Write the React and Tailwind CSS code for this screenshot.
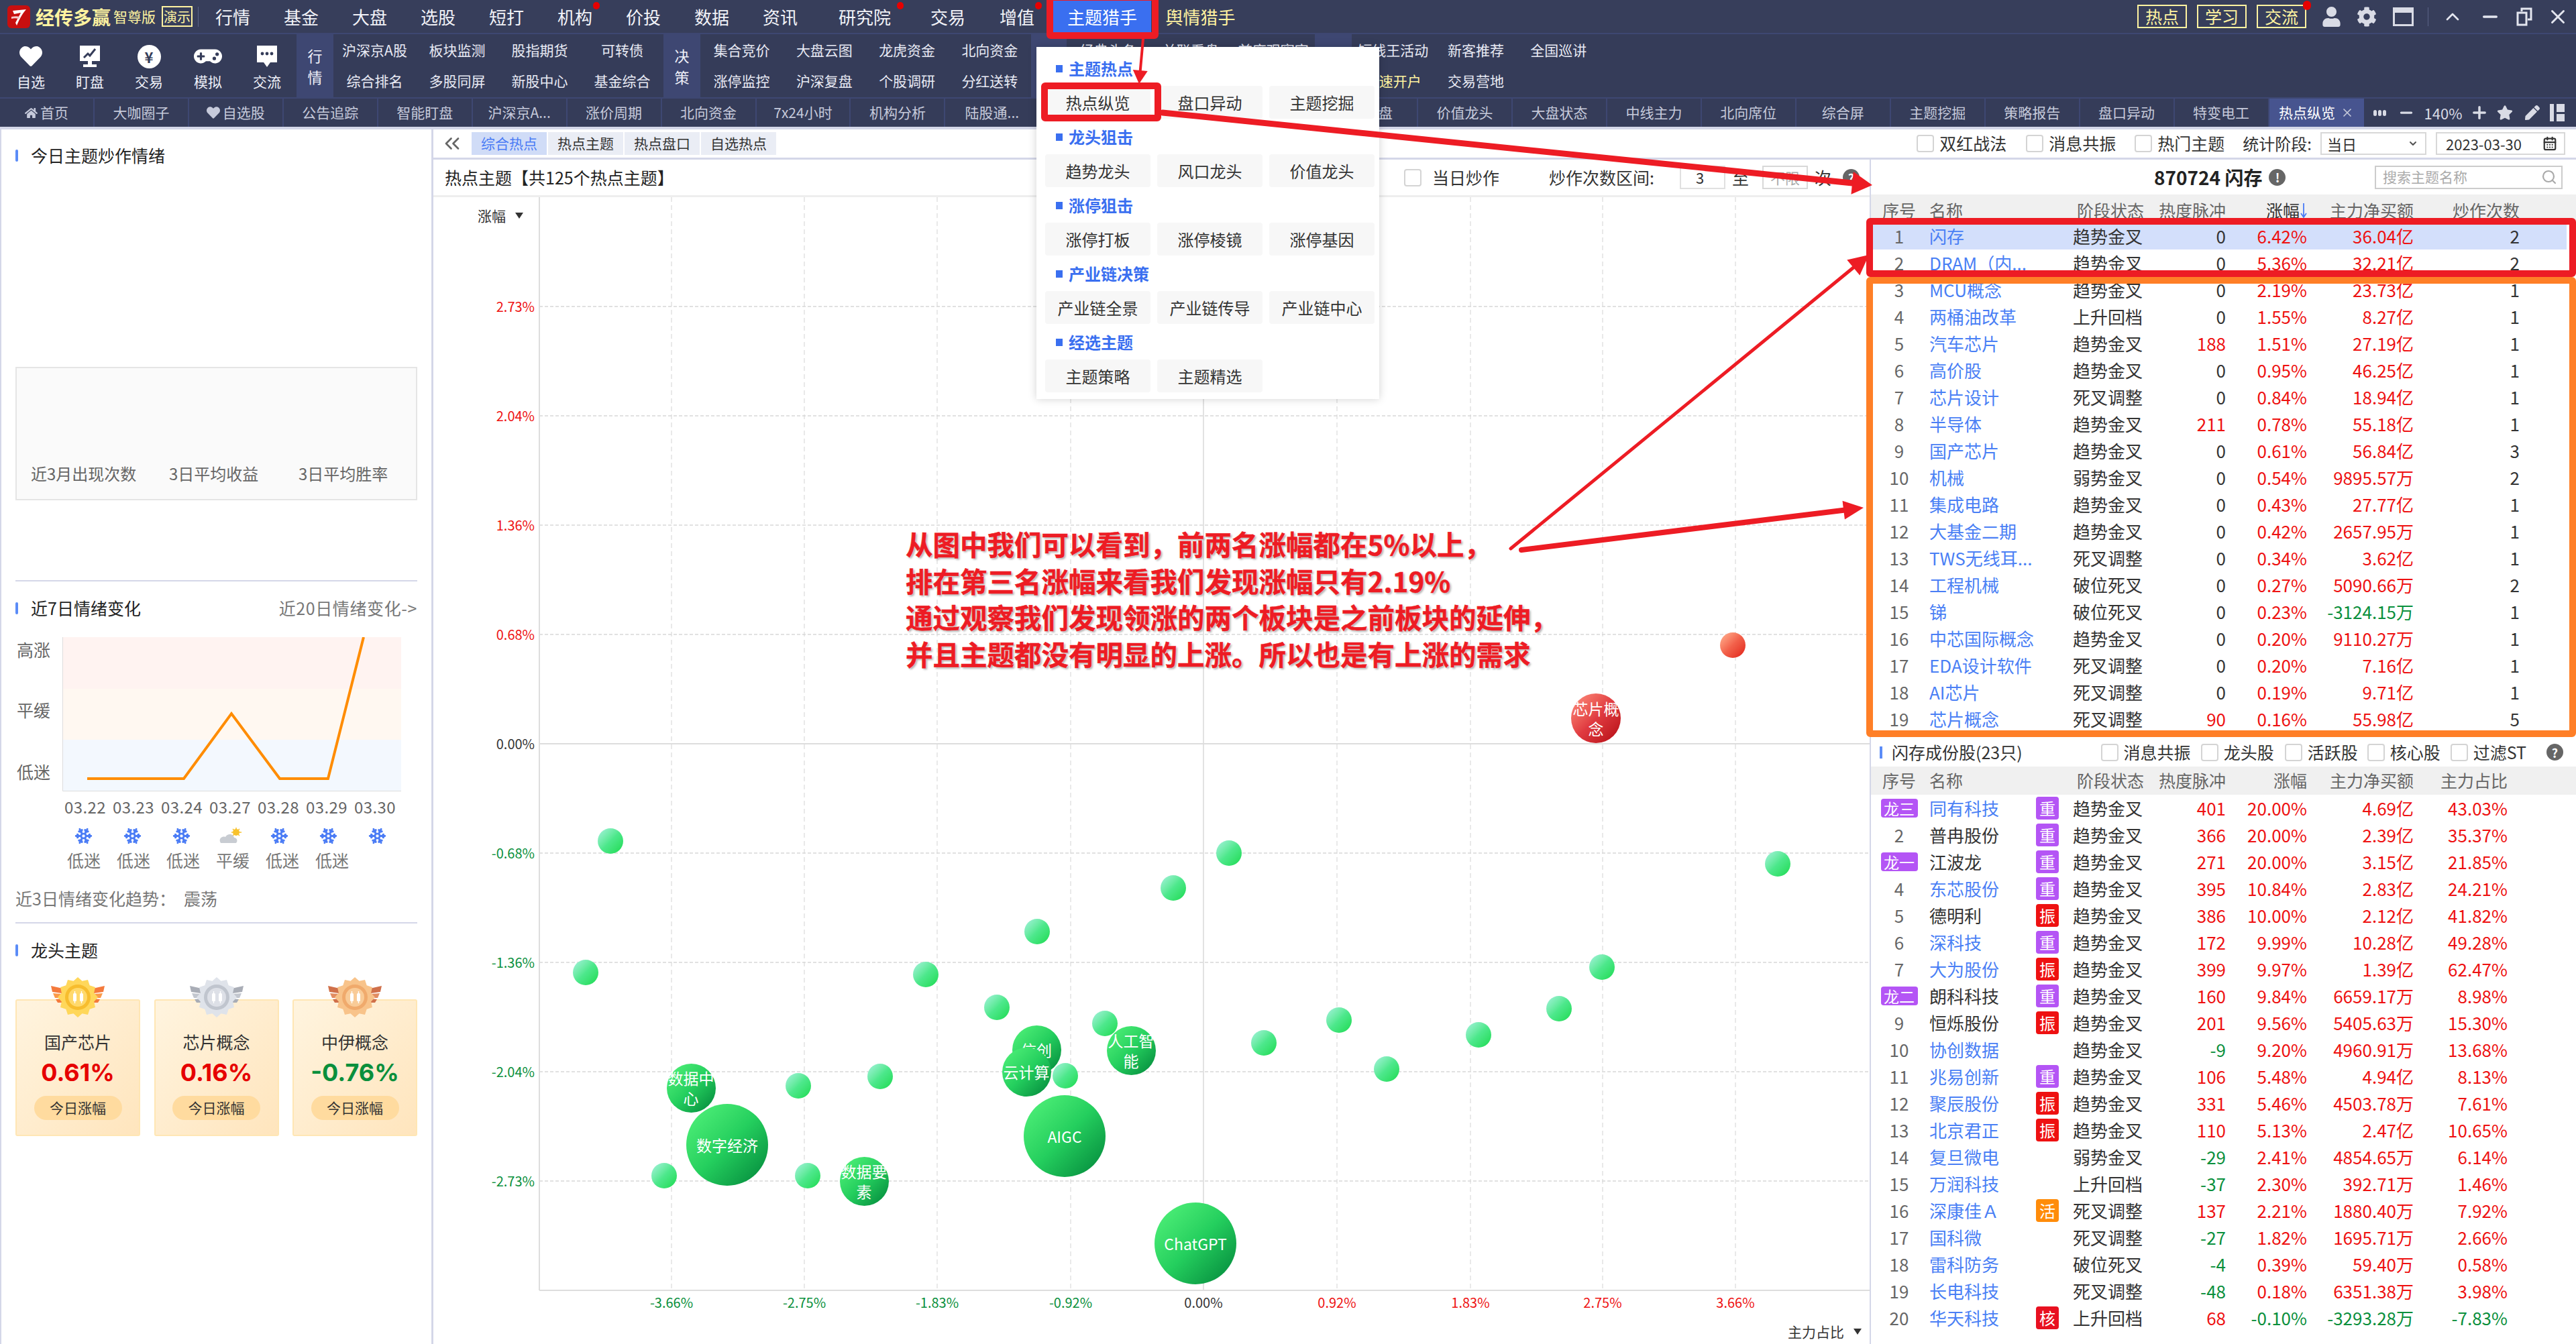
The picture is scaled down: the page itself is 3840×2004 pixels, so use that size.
import { Snowflake, Search, ChevronsLeft, CalendarDays, ChevronDown, Minus, Plus, X, ChevronUp } from 'lucide-react'
import { FaCog, FaStar, FaPen, FaUser, FaHome, FaHeart, FaGamepad } from 'react-icons/fa'

const menuItems = [
  ['行情', 'w-[102px]'], ['基金', 'w-[102px]'], ['大盘', 'w-[102px]'], ['选股', 'w-[102px]'], ['短打', 'w-[102px]'],
  ['机构', 'w-[102px]', 'right-[14px]'], ['价投', 'w-[102px]'], ['数据', 'w-[102px]'], ['资讯', 'w-[102px]'],
  ['研究院', 'w-[150px]', 'right-[17px]'], ['交易', 'w-[98px]'], ['增值', 'w-[108px]', 'right-[17px]'],
]

const tabs = ['首页', '大咖圈子', '自选股', '公告追踪', '智能盯盘', '沪深京A...', '涨价周期', '北向资金', '7x24小时', '机构分析', '陆股通...', '', '', '', '盘', '价值龙头', '大盘状态', '中线主力', '北向席位', '综合屏', '主题挖掘', '策略报告', '盘口异动', '特变电工']

const tools = [['沪深京A股', '板块监测', '股指期货', '可转债'], ['综合排名', '多股同屏', '新股中心', '基金综合']]
const tools2 = [['集合竞价', '大盘云图', '龙虎资金', '北向资金'], ['涨停监控', '沪深复盘', '个股调研', '分红送转']]

const dropdown = [
  ['主题热点', ['热点纵览', '盘口异动', '主题挖掘']],
  ['龙头狙击', ['趋势龙头', '风口龙头', '价值龙头']],
  ['涨停狙击', ['涨停打板', '涨停棱镜', '涨停基因']],
  ['产业链决策', ['产业链全景', '产业链传导', '产业链中心']],
  ['经选主题', ['主题策略', '主题精选']],
]

const themes = [
  ['闪存', '趋势金叉', '0', '6.42%', '36.04亿', '2'],
  ['DRAM（内...', '趋势金叉', '0', '5.36%', '32.21亿', '2'],
  ['MCU概念', '趋势金叉', '0', '2.19%', '23.73亿', '1'],
  ['两桶油改革', '上升回档', '0', '1.55%', '8.27亿', '1'],
  ['汽车芯片', '趋势金叉', '188', '1.51%', '27.19亿', '1'],
  ['高价股', '趋势金叉', '0', '0.95%', '46.25亿', '1'],
  ['芯片设计', '死叉调整', '0', '0.84%', '18.94亿', '1'],
  ['半导体', '趋势金叉', '211', '0.78%', '55.18亿', '1'],
  ['国产芯片', '趋势金叉', '0', '0.61%', '56.84亿', '3'],
  ['机械', '弱势金叉', '0', '0.54%', '9895.57万', '2'],
  ['集成电路', '趋势金叉', '0', '0.43%', '27.77亿', '1'],
  ['大基金二期', '趋势金叉', '0', '0.42%', '2657.95万', '1'],
  ['TWS无线耳...', '死叉调整', '0', '0.34%', '3.62亿', '1'],
  ['工程机械', '破位死叉', '0', '0.27%', '5090.66万', '2'],
  ['锑', '破位死叉', '0', '0.23%', '-3124.15万', '1'],
  ['中芯国际概念', '趋势金叉', '0', '0.20%', '9110.27万', '1'],
  ['EDA设计软件', '死叉调整', '0', '0.20%', '7.16亿', '1'],
  ['AI芯片', '死叉调整', '0', '0.19%', '9.71亿', '1'],
  ['芯片概念', '死叉调整', '90', '0.16%', '55.98亿', '5'],
]

const stocks = [
  ['龙三', '同有科技', 1, '重', '趋势金叉', '401', '20.00%', '4.69亿', '43.03%'],
  ['2', '普冉股份', 0, '重', '趋势金叉', '366', '20.00%', '2.39亿', '35.37%'],
  ['龙一', '江波龙', 0, '重', '趋势金叉', '271', '20.00%', '3.15亿', '21.85%'],
  ['4', '东芯股份', 1, '重', '趋势金叉', '395', '10.84%', '2.83亿', '24.21%'],
  ['5', '德明利', 0, '振', '趋势金叉', '386', '10.00%', '2.12亿', '41.82%'],
  ['6', '深科技', 1, '重', '趋势金叉', '172', '9.99%', '10.28亿', '49.28%'],
  ['7', '大为股份', 1, '振', '趋势金叉', '399', '9.97%', '1.39亿', '62.47%'],
  ['龙二', '朗科科技', 0, '重', '趋势金叉', '160', '9.84%', '6659.17万', '8.98%'],
  ['9', '恒烁股份', 0, '振', '趋势金叉', '201', '9.56%', '5405.63万', '15.30%'],
  ['10', '协创数据', 1, '', '趋势金叉', '-9', '9.20%', '4960.91万', '13.68%'],
  ['11', '兆易创新', 1, '重', '趋势金叉', '106', '5.48%', '4.94亿', '8.13%'],
  ['12', '聚辰股份', 1, '振', '趋势金叉', '331', '5.46%', '4503.78万', '7.61%'],
  ['13', '北京君正', 1, '振', '趋势金叉', '110', '5.13%', '2.47亿', '10.65%'],
  ['14', '复旦微电', 1, '', '弱势金叉', '-29', '2.41%', '4854.65万', '6.14%'],
  ['15', '万润科技', 1, '', '上升回档', '-37', '2.30%', '392.71万', '1.46%'],
  ['16', '深康佳Ａ', 1, '活', '死叉调整', '137', '2.21%', '1880.40万', '7.92%'],
  ['17', '国科微', 1, '', '死叉调整', '-27', '1.82%', '1695.71万', '2.66%'],
  ['18', '雷科防务', 1, '', '破位死叉', '-4', '0.39%', '59.40万', '0.58%'],
  ['19', '长电科技', 1, '', '死叉调整', '-48', '0.18%', '6351.38万', '3.98%'],
  ['20', '华天科技', 1, '核', '上升回档', '68', '-0.10%', '-3293.28万', '-7.83%'],
]

const tagColors = { 重: 'bg-[#b455f5]', 振: 'bg-[#ee1111]', 活: 'bg-[#ff8c0a]', 核: 'bg-[#e81020]' }

const CHART_X = 646
const CHART_Y = 294

const smallBubbles = [
  [910, 1254], [873, 1450], [990, 1753], [1190, 1619], [1312, 1605], [1204, 1753], [1380, 1453], [1486, 1502],
  [1546, 1389], [1647, 1526], [1749, 1324], [1832, 1272], [1884, 1555], [1996, 1521], [2067, 1594], [2204, 1543],
  [2324, 1504], [2388, 1442], [2650, 1288],
]

const bigBubbles = [
  ['数据中\n心', 1030, 1622, 73],
  ['数字经济', 1084, 1707, 122],
  ['数据要\n素', 1288, 1761, 73],
  ['信创', 1545, 1565, 73],
  ['云计算', 1530, 1598, 73],
  ['人工智\n能', 1686, 1566, 73],
  ['AIGC', 1587, 1694, 122],
  ['ChatGPT', 1782, 1854, 122],
]

const yTicks = [
  ['2.73%', 457, 'text-[#ee1111]'], ['2.04%', 620, 'text-[#ee1111]'], ['1.36%', 783, 'text-[#ee1111]'],
  ['0.68%', 946, 'text-[#ee1111]'], ['0.00%', 1109, 'text-[#333]'], ['-0.68%', 1272, 'text-[#0a8f3c]'],
  ['-1.36%', 1435, 'text-[#0a8f3c]'], ['-2.04%', 1598, 'text-[#0a8f3c]'], ['-2.73%', 1761, 'text-[#0a8f3c]'],
]

const xTicks = [
  ['-3.66%', 1001, 'text-[#0a8f3c]'], ['-2.75%', 1199, 'text-[#0a8f3c]'], ['-1.83%', 1397, 'text-[#0a8f3c]'],
  ['-0.92%', 1596, 'text-[#0a8f3c]'], ['0.00%', 1794, 'text-[#333]'], ['0.92%', 1993, 'text-[#ee1111]'],
  ['1.83%', 2192, 'text-[#ee1111]'], ['2.75%', 2389, 'text-[#ee1111]'], ['3.66%', 2587, 'text-[#ee1111]'],
]

function Logo() {
  return (
    <svg width="36" height="36" viewBox="0 0 36 36" className="ml-[10px] shrink-0">
      <rect x="1" y="1" width="34" height="34" rx="6" fill="#c80f0f" />
      <path d="M9 9 L29 7 C24 13 20 19 15 31 L13 27 C16 21 19 16 21 12 L11 14 Z" fill="#fff" />
      <path d="M7 18 C12 17 16 17 20 18 L18 21 C14 20 10 20 7 21 Z" fill="#f6c9c9" />
    </svg>
  )
}

function ToolIcon({ kind }) {
  if (kind === 'heart') return <FaHeart className="text-white w-[36px] h-[34px]" />
  if (kind === 'game') return <FaGamepad className="text-white w-[42px] h-[36px]" />
  if (kind === 'coin') {
    return (
      <div className="w-[35px] h-[35px] rounded-full bg-white flex items-center justify-center text-[#353c59] text-[22px] font-bold leading-none">¥</div>
    )
  }
  if (kind === 'screen') {
    return (
      <svg width="34" height="34" viewBox="0 0 34 34">
        <path d="M2 1 H32 V24 H2 Z M14 24 H20 V29 H27 V33 H7 V29 H14 Z" fill="#fff" />
        <path d="M8 19 L14 13 L17 16 L25 6" stroke="#353c59" strokeWidth="3" fill="none" />
      </svg>
    )
  }
  return (
    <svg width="36" height="34" viewBox="0 0 36 34">
      <path d="M3 1 H33 V26 H23 L18 33 L13 26 H3 Z" fill="#fff" />
      <circle cx="11" cy="13" r="2.4" fill="#353c59" />
      <circle cx="18" cy="13" r="2.4" fill="#353c59" />
      <circle cx="25" cy="13" r="2.4" fill="#353c59" />
    </svg>
  )
}

function VerticalLabel({ first, second, width }) {
  return (
    <div className={`${width} bg-[#3e4772] flex flex-col items-center justify-center gap-[6px] text-[22px] leading-[26px] text-[#eef0f8]`}>
      <span>{first}</span>
      <span>{second}</span>
    </div>
  )
}

function ToolGrid({ rows, width }) {
  return (
    <div className={`${width} grid grid-cols-4 grid-rows-2 items-center text-center text-[21px] text-[#e8eaf4] pb-[1px]`}>
      {rows.flat().map((t) => (
        <span key={t}>{t}</span>
      ))}
    </div>
  )
}

function Check({ label, className = '' }) {
  return (
    <label className={`flex items-center gap-[8px] text-[25px] ${className}`}>
      <span className="w-[26px] h-[26px] rounded-[4px] border-2 border-[#d4d4d4] bg-white" />
      <span>{label}</span>
    </label>
  )
}

function HelpDot({ mark = '?', className = '' }) {
  return (
    <span className={`w-[25px] h-[25px] rounded-full bg-[#666] text-white text-[18px] font-bold leading-none flex items-center justify-center ${className}`}>{mark}</span>
  )
}

function SectionTitle({ children, extra }) {
  return (
    <div className="flex items-center justify-between h-[80px] text-[25px]">
      <div className="flex items-center text-[#222]">
        <span className="w-[4px] h-[18px] rounded-[2px] bg-[#5b8cf7] mr-[19px]" />
        {children}
      </div>
      {extra}
    </div>
  )
}

function Medal({ wing, wing2, outer, inner, core }) {
  const points = Array.from({ length: 24 }, (_, i) => {
    const r = i % 2 ? 25 : 30
    const a = (i * Math.PI) / 12
    return `${40 + r * Math.sin(a)},${30 - r * Math.cos(a)}`
  }).join(' ')
  return (
    <svg width="80" height="60" viewBox="0 0 80 60">
      <path d="M0 13 L18 17 L16 24 L2 22 Z" fill={wing} />
      <path d="M3 24 L16 25 L16 31 L6 31 Z" fill={wing2} />
      <path d="M7 33 L17 32 L19 38 L10 38 Z" fill={wing} />
      <path d="M80 13 L62 17 L64 24 L78 22 Z" fill={wing} />
      <path d="M77 24 L64 25 L64 31 L74 31 Z" fill={wing2} />
      <path d="M73 33 L63 32 L61 38 L70 38 Z" fill={wing} />
      <polygon points={points} fill={outer} />
      <circle cx="40" cy="30" r="19" fill={inner} />
      <circle cx="40" cy="30" r="14" fill={core} />
      <rect x="33" y="24" width="5" height="12" rx="1.5" fill="#fff" />
      <rect x="43" y="24" width="5" height="12" rx="1.5" fill="#fff" />
      <path d="M35.5 21 V39 M45.5 21 V39" stroke="#fff" strokeWidth="1.4" />
    </svg>
  )
}

function TopCard({ title, value, color, medal }) {
  return (
    <div className="relative h-[204px] rounded-[3px] border-2 border-[#ffe6b4] bg-gradient-to-br from-[#fff4df] to-[#ffe5bd] flex flex-col items-center pt-[42px]">
      <div className="absolute -top-[35px] left-1/2 -translate-x-1/2">
        <Medal {...medal} />
      </div>
      <div className="text-[25px] leading-[38px] text-[#333]">{title}</div>
      <div className={`text-[36px] leading-[54px] font-bold ${color} font-['Inter','Noto_Sans_CJK_SC',sans-serif]`}>{value}</div>
      <div className="mt-[8px] w-[131px] h-[36px] rounded-full bg-[#ffdb9f] text-[21px] text-[#333] flex items-center justify-center">今日涨幅</div>
    </div>
  )
}

function Arrow({ x1, y1, x2, y2, w, head, spread }) {
  const len = Math.hypot(x2 - x1, y2 - y1)
  const ux = (x2 - x1) / len
  const uy = (y2 - y1) / len
  const bx = x2 - ux * head
  const by = y2 - uy * head
  const pts = `${x2},${y2} ${bx - uy * spread},${by + ux * spread} ${bx + uy * spread},${by - ux * spread}`
  return (
    <g>
      <line x1={x1} y1={y1} x2={bx} y2={by} stroke="#ed1c24" strokeWidth={w} strokeLinecap="round" />
      <polygon points={pts} fill="#ed1c24" />
    </g>
  )
}

function valueColor(v) {
  return v.startsWith('-') ? 'text-[#0a8f3c]' : 'text-[#ee1111]'
}

function hotColor(v) {
  if (v === '0') return 'text-[#333]'
  return v.startsWith('-') ? 'text-[#0a8f3c]' : 'text-[#ee1111]'
}

const themeCols = 'grid grid-cols-[84px_162px_37px_132px_114px_121px_159px_158px] items-center'
const stockCols = 'grid grid-cols-[84px_162px_37px_132px_114px_121px_159px_140px] items-center'

export default function App() {
  return (
    <div className="relative w-[3840px] h-[2004px] overflow-hidden bg-white flex flex-col font-['Noto_Sans_CJK_SC','Noto_Sans',sans-serif] text-[#333]">
      {/* title bar */}
      <header className="h-[49px] bg-[#373e5b] flex items-center text-[26px] text-[#f2f3f8]">
        <Logo />
        <span className="ml-[7px] text-[28px] font-bold text-[#fff3a0] w-[113px] whitespace-nowrap">经传多赢</span>
        <span className="ml-[3px] text-[21px] text-[#fff3a0] w-[66px] whitespace-nowrap">智尊版</span>
        <span className="ml-[6px] w-[46px] h-[31px] border-2 border-[#fff3a0] text-[#fff3a0] text-[20px] flex items-center justify-center">演示</span>
        <span className="ml-[8px] w-px h-[30px] bg-[#5a6285] mr-0" />
        <nav className="flex h-full items-center">
          {menuItems.map(([name, width, dot]) => (
            <div key={name} className={`relative ${width} text-center`}>
              {name}
              {dot && <span className={`absolute -top-[2px] ${dot} w-[10px] h-[11px] rounded-full bg-[#e60000]`} />}
            </div>
          ))}
          <div className="w-[146px] h-full bg-[#3a6ff0] text-white flex items-center justify-center">主题猎手</div>
          <div className="w-[147px] text-center text-[#fff3a0]">舆情猎手</div>
        </nav>
        <div className="ml-auto flex items-center h-full">
          <div className="relative flex gap-[15px] text-[25px] text-[#fff3a0]">
            {['热点', '学习', '交流'].map((t) => (
              <span key={t} className="w-[74px] h-[35px] border-2 border-[#fff3a0] flex items-center justify-center">{t}</span>
            ))}
            <span className="absolute -top-[6px] -right-[7px] w-[12px] h-[14px] rounded-full bg-[#e60000]" />
          </div>
          <FaUser className="ml-[24px] w-[27px] h-[30px] text-[#d9dbe5]" />
          <FaCog className="ml-[24px] w-[30px] h-[30px] text-[#d9dbe5]" />
          <span className="ml-[24px] w-[31px] h-[28px] border-[3px] border-t-[8px] border-[#d9dbe5]" />
          <span className="ml-[21px] w-px h-[28px] bg-[#5a6285]" />
          <ChevronUp className="ml-[20px] w-[32px] h-[32px] text-[#e4e6ef]" strokeWidth={2} />
          <Minus className="ml-[24px] w-[32px] h-[32px] text-[#e4e6ef]" strokeWidth={2.5} />
          <svg width="24" height="28" viewBox="0 0 24 28" className="ml-[23px] text-[#e4e6ef]">
            <path d="M8 6 V2 H22 V18 H17 M2 8 H15 V26 H2 Z" stroke="currentColor" strokeWidth="3" fill="none" />
          </svg>
          <X className="ml-[21px] mr-[10px] w-[34px] h-[34px] text-[#e4e6ef]" strokeWidth={2} />
        </div>
      </header>

      {/* tool row */}
      <div className="h-[98px] bg-[#353c59] border-y-2 border-[#3e4772] flex text-[#eef0f8]">
        <div className="w-[442px] flex pl-[2px]">
          {[['自选', 'heart'], ['盯盘', 'screen'], ['交易', 'coin'], ['模拟', 'game'], ['交流', 'chat']].map(([t, kind]) => (
            <div key={t} className="w-[88px] flex flex-col items-center pt-[15px]">
              <div className="h-[36px] flex items-center">
                <ToolIcon kind={kind} />
              </div>
              <span className="mt-[3px] text-[21px] leading-[32px]">{t}</span>
            </div>
          ))}
        </div>
        <VerticalLabel first="行" second="情" width="w-[55px]" />
        <ToolGrid rows={tools} width="w-[492px]" />
        <VerticalLabel first="决" second="策" width="w-[55px]" />
        <ToolGrid rows={tools2} width="w-[493px]" />
        <div className="w-[53px] bg-[#3e4772]" />
        <div className="w-[370px] grid grid-cols-3 grid-rows-2 items-center text-center text-[21px] text-[#e8eaf4] pb-[1px]">
          <span>经典头条</span>
          <span>关联看盘</span>
          <span>首席观察官</span>
        </div>
        <div className="w-[55px] bg-[#3e4772]" />
        <div className="w-[370px] grid grid-cols-3 grid-rows-2 items-center text-center text-[21px] text-[#e8eaf4] pb-[1px]">
          <span>短线王活动</span>
          <span>新客推荐</span>
          <span>全国巡讲</span>
          <span className="text-[#fff3a0]">快速开户</span>
          <span>交易营地</span>
        </div>
      </div>

      {/* tab row */}
      <div className="h-[42px] bg-[#353c59] flex items-center text-[21px] text-[#c6cadb]">
        {tabs.map((t, i) => (
          <div key={`${t}-${i}`} className="w-[140.95px] h-full shrink-0 border-r-2 border-[#3e4772] flex items-center justify-center gap-[4px] whitespace-nowrap">
            {i === 0 && <FaHome className="w-[19px] h-[19px]" />}
            {i === 2 && <FaHeart className="w-[20px] h-[20px]" />}
            {t === '盘' ? <span className="ml-[46px]">{t}</span> : t}
          </div>
        ))}
        <div className="w-[141px] h-full shrink-0 bg-[#47548f] text-white flex items-center justify-center gap-[8px] whitespace-nowrap">
          热点纵览
          <X className="w-[20px] h-[20px] text-[#c6cadb]" />
        </div>
        <div className="flex-1 flex items-center text-[#d9dbe5] whitespace-nowrap">
          <span className="ml-[14px] flex gap-[2px]">
            <span className="w-[5px] h-[9px] rounded-full bg-[#d9dbe5]" />
            <span className="w-[5px] h-[9px] rounded-full bg-[#d9dbe5]" />
            <span className="w-[5px] h-[9px] rounded-full bg-[#d9dbe5]" />
          </span>
          <Minus className="ml-[17px] w-[26px] h-[26px]" strokeWidth={3} />
          <span className="ml-[14px] text-[22px]">140%</span>
          <Plus className="ml-[12px] w-[28px] h-[28px]" strokeWidth={3} />
          <FaStar className="ml-[12px] w-[24px] h-[24px]" />
          <FaPen className="ml-[18px] w-[22px] h-[24px]" />
          <span className="ml-[15px] w-[22px] h-[26px] flex gap-[4px]">
            <span className="w-[6px] h-full bg-[#d9dbe5]" />
            <span className="flex-1 flex flex-col gap-[3px]">
              <span className="flex-1 bg-[#d9dbe5]" />
              <span className="flex-1 bg-[#d9dbe5]" />
            </span>
          </span>
        </div>
      </div>

      {/* content */}
      <div className="h-[4px] bg-[#d4d7e8]" />
      <main className="flex-1 flex min-h-0">
        <aside className="w-[646px] shrink-0 border-l-2 border-r-[3px] border-l-[#d4d7e8] border-r-[#d4d7e8] pl-[21px] pr-[21px]">
          <div className="h-[78px] flex items-center text-[25px] text-[#222]">
            <span className="w-[4px] h-[18px] rounded-[2px] bg-[#5b8cf7] mr-[19px]" />
            今日主题炒作情绪
          </div>
          <div className="mt-[276px] h-[199px] border-2 border-[#e5e5e5] bg-[#fafafa] relative">
            <div className="absolute left-0 right-0 bottom-[22px] flex text-[24px] leading-[32px] text-[#666]">
              <span className="ml-[21px] w-[206px]">近3月出现次数</span>
              <span className="w-[193px]">3日平均收益</span>
              <span>3日平均胜率</span>
            </div>
          </div>
          <div className="mt-[119px] h-[2px] bg-[#d4d7e8]" />
          <SectionTitle extra={<span className="text-[#777] tracking-[0.6px]">近20日情绪变化-&gt;</span>}>近7日情绪变化</SectionTitle>
          <div className="mt-[3px] flex h-[230px]">
            <div className="w-[70px] pl-[2px] flex flex-col justify-between pt-0 pb-[10px] text-[25px] text-[#666]">
              <span>高涨</span>
              <span className="-mt-[2px]">平缓</span>
              <span className="mb-[1px]">低迷</span>
            </div>
            <svg width="505" height="230" viewBox="0 0 505 230" className="shrink-0">
              <rect x="1" width="504" height="77" fill="#fff3f1" />
              <rect x="1" y="77" width="504" height="76" fill="#fff8f1" />
              <rect x="1" y="153" width="504" height="76" fill="#f3f8fe" />
              <path d="M0.5 0 V229.5 H505" stroke="#dddddd" strokeWidth="1" fill="none" />
              <polyline points="37,211 181,211 252,114 324,211 396,211 449,0" stroke="#ff8c00" strokeWidth="4" fill="none" />
            </svg>
          </div>
          <div className="ml-[68px] h-[46px] flex items-center text-[24px] text-[#666] tracking-[0.4px]">
            {['03.22', '03.23', '03.24', '03.27', '03.28', '03.29', '03.30'].map((d) => (
              <span key={d} className="w-[72px] text-center">{d}</span>
            ))}
          </div>
          <div className="ml-[65px] h-[40px] flex items-center">
            {[0, 1, 2, 3, 4, 5, 6].map((i) => (
              <div key={i} className="w-[73px] flex justify-center">
                {i === 3 ? (
                  <svg width="36" height="24" viewBox="0 0 36 24">
                    <circle cx="26" cy="7" r="5" fill="#f8c22d" />
                    <path d="M26 0 V2 M19 7 H34 M21 2 L31 12 M31 2 L21 12" stroke="#f8c22d" strokeWidth="1.5" />
                    <path d="M3 23 C-1 17 5 12 10 14 C13 8 22 9 23 15 C27 15 29 20 26 23 Z" fill="#c8ccd2" />
                  </svg>
                ) : (
                  <Snowflake className="w-[27px] h-[27px] text-[#4b7cf5]" strokeWidth={2.6} />
                )}
              </div>
            ))}
          </div>
          <div className="ml-[65px] h-[34px] flex items-center text-[25px] text-[#777]">
            {['低迷', '低迷', '低迷', '平缓', '低迷', '低迷'].map((t, i) => (
              <span key={i} className="w-[74px] text-center">{t}</span>
            ))}
          </div>
          <div className="h-[75px] pt-[5px] flex items-center text-[25px] text-[#777]">近3日情绪变化趋势：<span className="ml-[12px]">震荡</span></div>
          <div className="h-[2px] bg-[#d4d7e8]" />
          <SectionTitle>龙头主题</SectionTitle>
          <div className="mt-[33px] grid grid-cols-3 gap-x-[20.5px]">
            <TopCard title="国产芯片" value="0.61%" color="text-[#e60000]" medal={{ wing: '#f47a3c', wing2: '#fb9a4a', outer: '#ffd75a', inner: '#f7bd2e', core: '#ffd96b' }} />
            <TopCard title="芯片概念" value="0.16%" color="text-[#e60000]" medal={{ wing: '#a9adb6', wing2: '#c3c7cf', outer: '#dfe3ea', inner: '#c0c5ce', core: '#dde0e7' }} />
            <TopCard title="中伊概念" value="-0.76%" color="text-[#0a8f3c]" medal={{ wing: '#d0704a', wing2: '#e28d62', outer: '#f8c38a', inner: '#f0aa6c', core: '#f9cb97' }} />
          </div>
        </aside>

        <div className="flex-1 min-w-0 flex flex-col">
          {/* filter row */}
          <div className="h-[42px] flex items-center text-[24px] text-[#333] border-b-0 whitespace-nowrap">
            <ChevronsLeft className="ml-[10px] w-[36px] h-[36px] text-[#666]" strokeWidth={1.8} />
            <div className="ml-[11px] flex gap-[2px] text-[21px]">
              <span className="w-[112px] h-[34px] bg-[#d0dcf7] text-[#4b7cf5] flex items-center justify-center">综合热点</span>
              <span className="w-[112px] h-[34px] bg-[#eaedf5] flex items-center justify-center">热点主题</span>
              <span className="w-[112px] h-[34px] bg-[#eaedf5] flex items-center justify-center">热点盘口</span>
              <span className="w-[112px] h-[34px] bg-[#eaedf5] flex items-center justify-center">自选热点</span>
            </div>
            <div className="ml-auto flex items-center pr-[16px]">
              <Check label="双红战法" />
              <Check label="消息共振" className="ml-[29px]" />
              <Check label="热门主题" className="ml-[28px]" />
              <span className="ml-[27px]">统计阶段:</span>
              <div className="ml-[13px] w-[158px] h-[34px] border-2 border-[#d8d8d8] text-[22px] flex items-center pl-[8px] pr-[10px] justify-between">
                当日
                <ChevronDown className="w-[16px] h-[16px] text-[#555]" strokeWidth={3} />
              </div>
              <div className="ml-[14px] w-[193px] h-[34px] border-2 border-[#d8d8d8] flex items-center pl-[13px] pr-[10px] justify-between text-[22px]">
                2023-03-30
                <CalendarDays className="w-[22px] h-[24px] text-[#333]" strokeWidth={2.4} />
              </div>
            </div>
          </div>
          <div className="h-[3px] bg-[#d4d7e8]" />

          <div className="flex-1 flex min-h-0">
            {/* bubble chart */}
            <section className="w-[2141px] shrink-0 flex flex-col">
              <div className="h-[53px] flex items-center pl-[17px] text-[25px] text-[#222] whitespace-nowrap">
                热点主题【共125个热点主题】
                <div className="ml-auto flex items-center pr-[15px] text-[#333]">
                  <Check label="当日炒作" className="gap-[16px]" />
                  <span className="ml-[74px]">炒作次数区间:</span>
                  <span className="ml-[38px] w-[68px] h-[35px] border-2 border-[#e0e0e0] text-[22px] pl-[22px] flex items-center">3</span>
                  <span className="ml-[10px]">至</span>
                  <span className="ml-[20px] w-[68px] h-[35px] border-2 border-[#d8d8d8] text-[22px] text-[#aaa] flex items-center justify-center">不限</span>
                  <span className="ml-[10px]">次</span>
                  <HelpDot className="ml-[17px]" />
                </div>
              </div>
              <div className="h-[3px] bg-[#eeeeee]" />
              <div className="relative flex-1">
                <svg width="2141" height="1707" viewBox="646 294 2141 1707" className="absolute left-0 top-0">
                  {[1001, 1199, 1397, 1596, 1993, 2192, 2389, 2587].map((x) => (
                    <line key={x} x1={x} x2={x} y1="294" y2="1924" stroke="#e2e2e2" strokeWidth="1.5" strokeDasharray="7 5" />
                  ))}
                  {[457, 620, 783, 946, 1272, 1435, 1598, 1761].map((y) => (
                    <line key={y} x1="804" x2="2787" y1={y} y2={y} stroke="#d8d8d8" strokeWidth="1.5" strokeDasharray="5 3" />
                  ))}
                  <line x1="804" x2="804" y1="294" y2="1924" stroke="#dddddd" strokeWidth="2" />
                  <line x1="1794" x2="1794" y1="294" y2="1924" stroke="#e2e2e2" strokeWidth="2" />
                  <line x1="804" x2="2787" y1="1109" y2="1109" stroke="#dddddd" strokeWidth="2" />
                  <line x1="804" x2="2787" y1="1924" y2="1924" stroke="#dddddd" strokeWidth="2" />
                </svg>
                <div className="absolute left-[66px] top-[12px] flex items-center gap-[14px] text-[21px] text-[#333]">
                  涨幅
                  <span className="w-0 h-0 border-x-[6px] border-x-transparent border-t-[9px] border-t-[#333]" />
                </div>
                {yTicks.map(([t, y, color]) => (
                  <span key={t} className={`absolute right-[1990px] text-[20px] leading-[28px] ${color}`} style={{ top: y - CHART_Y - 14 }}>{t}</span>
                ))}
                {xTicks.map(([t, x, color]) => (
                  <span key={t} className={`absolute w-[100px] text-center text-[20px] leading-[28px] ${color}`} style={{ left: x - CHART_X - 50, top: 1942 - CHART_Y - 14 }}>{t}</span>
                ))}
                <div className="absolute right-[12px] top-[1676px] flex items-center gap-[14px] text-[21px] text-[#333]">
                  主力占比
                  <span className="w-0 h-0 border-x-[6px] border-x-transparent border-t-[9px] border-t-[#333]" />
                </div>
                {smallBubbles.map(([x, y]) => (
                  <div key={`${x}-${y}`} className="absolute w-[38px] h-[38px] rounded-full bg-gradient-to-br from-[#a4f2df] via-[#4de88c] to-[#10da4a]" style={{ left: x - CHART_X - 19, top: y - CHART_Y - 19 }} />
                ))}
                <div className="absolute w-[38px] h-[38px] rounded-full bg-gradient-to-br from-[#ffb595] via-[#f2604a] to-[#e01010]" style={{ left: 2583 - CHART_X - 19, top: 962 - CHART_Y - 19 }} />
                <div className="absolute w-[38px] h-[38px] rounded-full bg-gradient-to-br from-[#a4f2df] via-[#4de88c] to-[#10da4a]" style={{ left: 1588 - CHART_X - 19, top: 1604 - CHART_Y - 19 }} />
                {bigBubbles.map(([t, x, y, d]) => (
                  <div key={t} className="absolute rounded-full bg-gradient-to-br from-[#52f57c] via-[#24cf5e] to-[#00853a] flex items-center justify-center text-center text-white text-[23px] leading-[30px] whitespace-pre-line" style={{ left: x - d / 2 - CHART_X, top: y - d / 2 - CHART_Y, width: d, height: d }}>
                    {t}
                  </div>
                ))}
                <div className="absolute rounded-full bg-gradient-to-br from-[#ff8f80] via-[#e03a40] to-[#b40010] flex items-center justify-center text-center text-white text-[23px] leading-[30px] whitespace-pre-line" style={{ left: 2379 - 37 - CHART_X, top: 1071 - 37 - CHART_Y, width: 74, height: 74 }}>
                  {'芯片概\n念'}
                </div>
              </div>
            </section>

            {/* theme tables */}
            <section className="flex-1 min-w-0 border-l-2 border-[#d4d7e8] flex flex-col">
              <div className="relative h-[52px] shrink-0 flex items-center">
                <div className="absolute left-[422px] flex items-center gap-[10px] text-[28px] font-bold text-[#222] whitespace-nowrap">
                  870724 闪存
                  <HelpDot mark="!" />
                </div>
                <div className="ml-auto mr-[20px] w-[280px] h-[35px] border-2 border-[#cccccc] flex items-center justify-between pl-[10px] pr-[6px] text-[21px] text-[#aaaaaa]">
                  搜索主题名称
                  <Search className="w-[24px] h-[24px] text-[#aaa]" strokeWidth={2.2} />
                </div>
              </div>
              <div className={`${themeCols} h-[43px] shrink-0 bg-[#f0f0f0] text-[25px] text-[#666] pt-[4px]`}>
                <span className="text-center">序号</span>
                <span className="pl-[3px]">名称</span>
                <span />
                <span className="pl-[24px]">阶段状态</span>
                <span className="text-right">热度脉冲</span>
                <span className="text-[#333] flex justify-end items-center gap-[1px]">
                  涨幅
                  <svg width="10" height="24" viewBox="0 0 10 24">
                    <path d="M5 1 V21 M1 16 L5 22 L9 16" stroke="#4b7cf5" strokeWidth="1.8" fill="none" />
                  </svg>
                </span>
                <span className="text-right">主力净买额</span>
                <span className="text-right">炒作次数</span>
              </div>
              <div className="h-[760px] shrink-0 -mt-[1px]">
                {themes.map((row, i) => (
                  <div key={row[0]} className={`${themeCols} h-[40px] text-[26px] leading-[40px] ${i === 0 ? 'bg-[#d3dffb] mr-[14px]' : ''}`}>
                    <span className="text-center text-[#666]">{i + 1}</span>
                    <span className="pl-[3px] text-[#4a7ff5] whitespace-nowrap">{row[0]}</span>
                    <span />
                    <span className="pl-[18px] whitespace-nowrap">{row[1]}</span>
                    <span className={`text-right ${hotColor(row[2])}`}>{row[2]}</span>
                    <span className={`text-right ${valueColor(row[3])}`}>{row[3]}</span>
                    <span className={`text-right ${valueColor(row[4])}`}>{row[4]}</span>
                    <span className="text-right">{row[5]}</span>
                  </div>
                ))}
              </div>
              <div className="h-[8px] shrink-0 bg-white" />
              <div className="h-[43px] shrink-0 flex items-center text-[25px] text-[#333] whitespace-nowrap">
                <span className="ml-[13px] w-[4px] h-[18px] bg-[#5b8cf7]" />
                <span className="ml-[14px]">闪存成份股(23只)</span>
                <div className="ml-auto flex items-center pr-[19px]">
                  <Check label="消息共振" />
                  <Check label="龙头股" className="ml-[15px]" />
                  <Check label="活跃股" className="ml-[16px]" />
                  <Check label="核心股" className="ml-[14px]" />
                  <Check label="过滤ST" className="ml-[15px]" />
                  <HelpDot className="ml-[30px]" />
                </div>
              </div>
              <div className={`${stockCols} h-[42px] shrink-0 bg-[#f0f0f0] text-[25px] text-[#666]`}>
                <span className="text-center">序号</span>
                <span className="pl-[3px]">名称</span>
                <span />
                <span className="pl-[24px]">阶段状态</span>
                <span className="text-right">热度脉冲</span>
                <span className="text-right">涨幅</span>
                <span className="text-right">主力净买额</span>
                <span className="text-right">主力占比</span>
              </div>
              {stocks.map((row) => (
                <div key={row[1]} className={`${stockCols} h-[40px] shrink-0 text-[26px] leading-[40px]`}>
                  {row[0].startsWith('龙') ? (
                    <span className="justify-self-center w-[55px] h-[28px] rounded-[4px] bg-[#b455f5] text-white text-[23px] flex items-center justify-center">{row[0]}</span>
                  ) : (
                    <span className="text-center text-[#666]">{row[0]}</span>
                  )}
                  <span className={`pl-[3px] whitespace-nowrap ${row[2] ? 'text-[#4a7ff5]' : 'text-[#333]'}`}>{row[1]}</span>
                  {row[3] ? (
                    <span className={`w-[34px] h-[34px] rounded-[4px] text-white text-[24px] flex items-center justify-center ${tagColors[row[3]]}`}>{row[3]}</span>
                  ) : (
                    <span />
                  )}
                  <span className="pl-[18px] whitespace-nowrap">{row[4]}</span>
                  <span className={`text-right ${hotColor(row[5])}`}>{row[5]}</span>
                  <span className={`text-right ${valueColor(row[6])}`}>{row[6]}</span>
                  <span className={`text-right ${valueColor(row[7])}`}>{row[7]}</span>
                  <span className={`text-right ${valueColor(row[8])}`}>{row[8]}</span>
                </div>
              ))}
            </section>
          </div>
        </div>
      </main>

      {/* 主题猎手 dropdown */}
      <div className="absolute left-[1545px] top-[70px] w-[511px] h-[525px] bg-white shadow-[0_0_12px_rgba(0,0,0,0.18)] pt-[8px] pl-[13px] z-10">
        {dropdown.map(([title, items]) => (
          <div key={title} className="h-[102px]">
            <div className="h-[48px] flex items-center text-[24px] font-bold text-[#3a6ff0]">
              <span className="ml-[16px] mr-[9px] w-[10px] h-[11px] bg-[#3a6ff0]" />
              {title}
            </div>
            <div className="mt-[2px] flex gap-[10px]">
              {items.map((t) => (
                <span key={t} className="w-[157px] h-[49px] rounded-[4px] bg-[#f7f7f7] text-[24px] text-[#333] flex items-center justify-center whitespace-nowrap">{t}</span>
              ))}
            </div>
          </div>
        ))}
      </div>

      {/* annotations drawn on top of the screenshot */}
      <div className="absolute left-[1350px] top-[784px] z-20 text-[40.5px] leading-[54.5px] font-bold text-[#ed1c24] whitespace-nowrap [-webkit-text-stroke:0.5px_#ed1c24] [text-shadow:0_0_2px_#fff,2px_2px_3px_#aaa]">
        <p>从图中我们可以看到，前两名涨幅都在5%以上，</p>
        <p>排在第三名涨幅来看我们发现涨幅只有2.19%</p>
        <p>通过观察我们发现领涨的两个板块是之前板块的延伸，</p>
        <p>并且主题都没有明显的上涨。所以也是有上涨的需求</p>
      </div>
      <div className="absolute left-[1560px] -top-[9px] w-[167px] h-[67px] border-[10px] border-[#ed1c24] rounded-[6px] z-20" />
      <div className="absolute left-[1552px] top-[123px] w-[179px] h-[58px] border-[10px] border-[#ed1c24] rounded-[6px] z-20" />
      <div className="absolute left-[2782px] top-[325px] w-[1058px] h-[88px] border-[10px] border-[#ed1c24] rounded-[6px] z-20" />
      <div className="absolute left-[2782px] top-[413px] w-[1058px] h-[686px] border-[10px] border-[#ff7f27] rounded-[6px] z-20" />
      <svg width="3840" height="2004" viewBox="0 0 3840 2004" className="absolute left-0 top-0 z-20 pointer-events-none">
        <Arrow x1={1704} y1={58} x2={1698} y2={125} w={4} head={20} spread={11} />
        <Arrow x1={1733} y1={168} x2={2791} y2={276} w={9} head={30} spread={17} />
        <Arrow x1={2252} y1={818} x2={2786} y2={380} w={5} head={30} spread={15} />
        <Arrow x1={2268} y1={820} x2={2778} y2={757} w={8} head={30} spread={14} />
      </svg>
    </div>
  )
}
